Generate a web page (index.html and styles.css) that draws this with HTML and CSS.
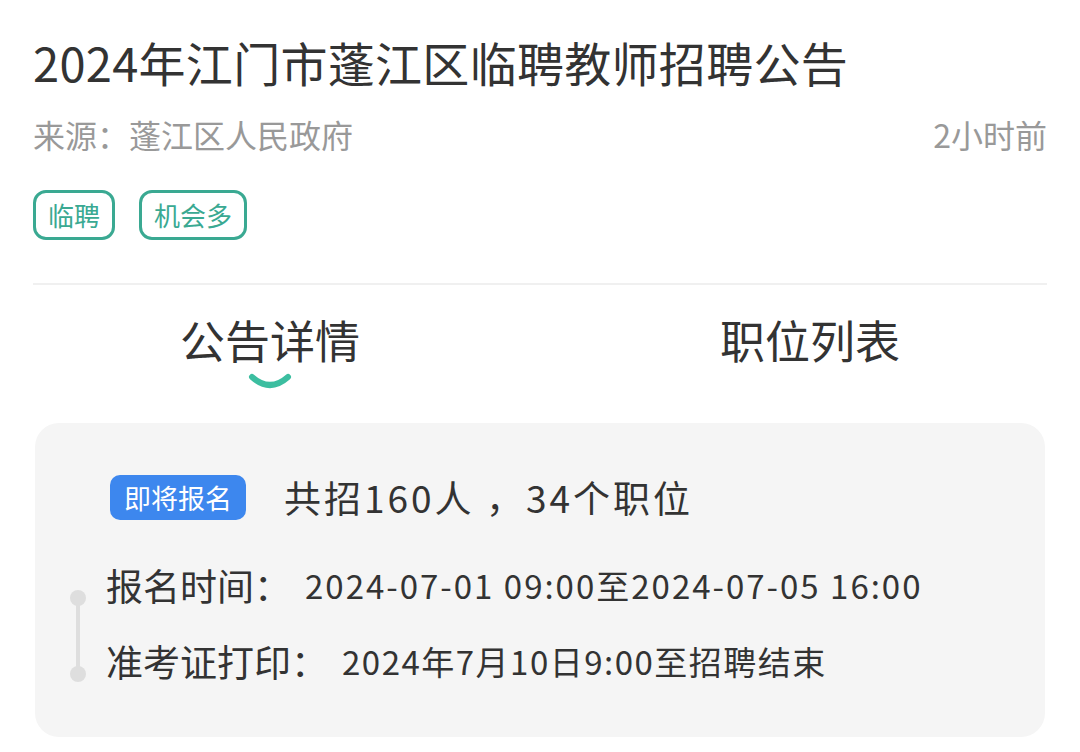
FILE: index.html
```html
<!DOCTYPE html>
<html lang="zh-CN">

<head>
    <meta charset="UTF-8">
    <meta name="viewport" content="width=device-width, initial-scale=1.0">
    <title>招聘公告</title>
    <link rel="stylesheet" href="styles.css">
</head>

<body>
    <div class="head">
        <h1 class="title">2024年江门市蓬江区临聘教师招聘公告</h1>
        <div class="meta">
            <span class="source">来源：蓬江区人民政府</span>
            <span class="time">2小时前</span>
        </div>
        <div class="tags">
            <span class="tag">临聘</span>
            <span class="tag">机会多</span>
        </div>
    </div>

    <div class="tabs">
        <div class="tab active">
            <span>公告详情</span>
            <svg class="smile" width="44" height="18" viewBox="0 0 44 18">
                <path d="M4 4 Q22 20 40 4" fill="none" stroke="#3cbea0" stroke-width="6" stroke-linecap="round"/>
            </svg>
        </div>
        <div class="tab">
            <span>职位列表</span>
        </div>
    </div>

    <div class="card">
        <div class="summary">
            <span class="badge">即将报名</span>
            <span class="total">共招160人 ，34个职位</span>
        </div>
        <div class="timeline">
            <div class="row">
                <span class="label">报名时间：</span>
                <span class="value">2024-07-01 09:00至2024-07-05 16:00</span>
            </div>
            <div class="row">
                <span class="label">准考证打印：</span>
                <span class="value second">2024年7月10日9:00至招聘结束</span>
            </div>
        </div>
    </div>
</body>

</html>
```

FILE: styles.css
```css
* {
    margin: 0;
    padding: 0;
    box-sizing: border-box;
}

body {
    width: 1080px;
    background: #fff;
    color: #333;
    font-family: "Noto Sans CJK SC", "Noto Sans", sans-serif;
}

.head {
    padding: 30px 33px 0;
}

.title {
    font-size: 47px;
    font-weight: 400;
    line-height: 64px;
    color: #333;
    letter-spacing: 0.3px;
}

.meta {
    display: flex;
    justify-content: space-between;
    align-items: center;
    margin-top: 18px;
    font-size: 32px;
    line-height: 44px;
    color: #999;
}

.tags {
    display: flex;
    gap: 24px;
    margin-top: 34px;
    padding-bottom: 43px;
    border-bottom: 2px solid #f0f0f0;
}

.tag {
    height: 50px;
    padding: 0 12px;
    border: 3px solid #3aa992;
    border-radius: 13px;
    color: #3aa992;
    font-size: 26px;
    line-height: 44px;
}

.tabs {
    display: flex;
    height: 138px;
}

.tab {
    flex: 1;
    display: flex;
    flex-direction: column;
    align-items: center;
    padding-top: 24px;
    font-size: 45px;
    line-height: 62px;
    color: #333;
}

.smile {
    margin-top: 2px;
}

.card {
    margin: 0 35px;
    padding: 50px 0 38px 75px;
    background: #f5f5f5;
    border-radius: 24px;
}

.summary {
    display: flex;
    align-items: center;
    gap: 38px;
}

.badge {
    height: 45px;
    padding: 0 14px;
    background: #3d87ee;
    border-radius: 10px;
    color: #fff;
    font-size: 27px;
    line-height: 45px;
}

.total {
    font-size: 37px;
    line-height: 48px;
    letter-spacing: 3px;
}

.timeline {
    position: relative;
    margin-top: 26px;
    margin-left: -4px;
}

/* 竖线连接两个圆点 */
.timeline::before {
    content: "";
    position: absolute;
    left: -30px;
    top: 51px;
    height: 78px;
    width: 4px;
    background: #dedede;
}

.row {
    position: relative;
    display: flex;
    align-items: center;
    height: 76px;
}

.row::before {
    content: "";
    position: absolute;
    left: -36px;
    top: 43px;
    width: 16px;
    height: 16px;
    border-radius: 50%;
    background: #dedede;
}

.label {
    font-size: 37px;
}

.value {
    margin-left: 14px;
    font-size: 33px;
    letter-spacing: 2px;
}

.value.second {
    letter-spacing: 1.5px;
}
```
